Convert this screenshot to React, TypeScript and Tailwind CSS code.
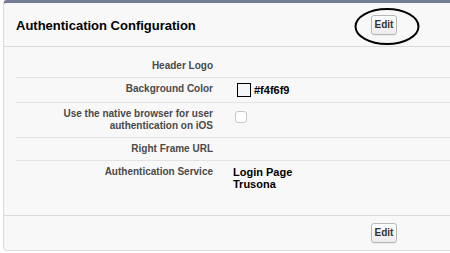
import React from "react";

function EditButton() {
  return (
    <button className="w-[26px] h-[20px] rounded-[3px] border border-[#b8b8b8] bg-gradient-to-b from-white to-[#ececec] text-[10px] font-bold text-[#333] leading-none flex items-center justify-center shadow-[0_1px_0_rgba(0,0,0,0.05)]">
      Edit
    </button>
  );
}

function Row({
  label,
  children,
  last,
}: {
  label: React.ReactNode;
  children?: React.ReactNode;
  last?: boolean;
}) {
  return (
    <div
      className={`ml-[12px] flex py-[5px] ${last ? "" : "border-b border-[#e3e3e3]"}`}
    >
      <div className="w-[197px] shrink-0 text-right text-[10px] leading-[12px] font-bold text-[#4a4a4a]">
        {label}
      </div>
      <div className="pl-[20px] text-[11px] leading-[12px] font-bold text-black">
        {children}
      </div>
    </div>
  );
}

export default function App() {
  return (
    <div className="w-[450px] h-[253px] overflow-hidden bg-white font-['Liberation_Sans',Arial,sans-serif]">
      <div className="relative ml-[3px] w-[447px] h-[251px] bg-[#f8f8f8] border-t-[3px] border-t-[#747c93] border-l border-b border-l-[#dcdcdc] border-b-[#dcdcdc] rounded-tl-[4px] rounded-bl-[4px] flex flex-col">
        <div className="h-[44px] flex items-center justify-between pl-[12px] pr-[53px] border-b border-[#dadada]">
          <div className="pt-[2px] text-[13px] font-bold text-black">
            Authentication Configuration
          </div>
          <EditButton />
        </div>
        <div className="pt-[8px] pb-[20px]">
          <Row label="Header Logo" />
          <Row label="Background Color">
            <div className="flex items-center h-[14px]">
              <div className="ml-[4px] w-[14px] h-[14px] border-[1.5px] border-black bg-[#f4f6f9]" />
              <span className="ml-[3px]">#f4f6f9</span>
            </div>
          </Row>
          <Row
            label={
              <>
                Use the native browser for user
                <br />
                authentication on iOS
              </>
            }
          >
            <div className="ml-[2px] mt-[3px] w-[12px] h-[12px] rounded-[3px] border border-[#c8c8c8] bg-white" />
          </Row>
          <Row label="Right Frame URL" />
          <Row label="Authentication Service" last>
            <div>Login Page</div>
            <div>Trusona</div>
          </Row>
        </div>
        <div className="flex-1 border-t border-[#dadada] flex items-center justify-end pr-[53px]">
          <EditButton />
        </div>
        <svg
          className="absolute left-[350px] top-[3px] pointer-events-none"
          width="70"
          height="44"
          viewBox="0 0 70 44"
        >
          <ellipse cx="33" cy="20.5" rx="31.5" ry="17.5" fill="none" stroke="black" strokeWidth="2" />
        </svg>
      </div>
    </div>
  );
}
